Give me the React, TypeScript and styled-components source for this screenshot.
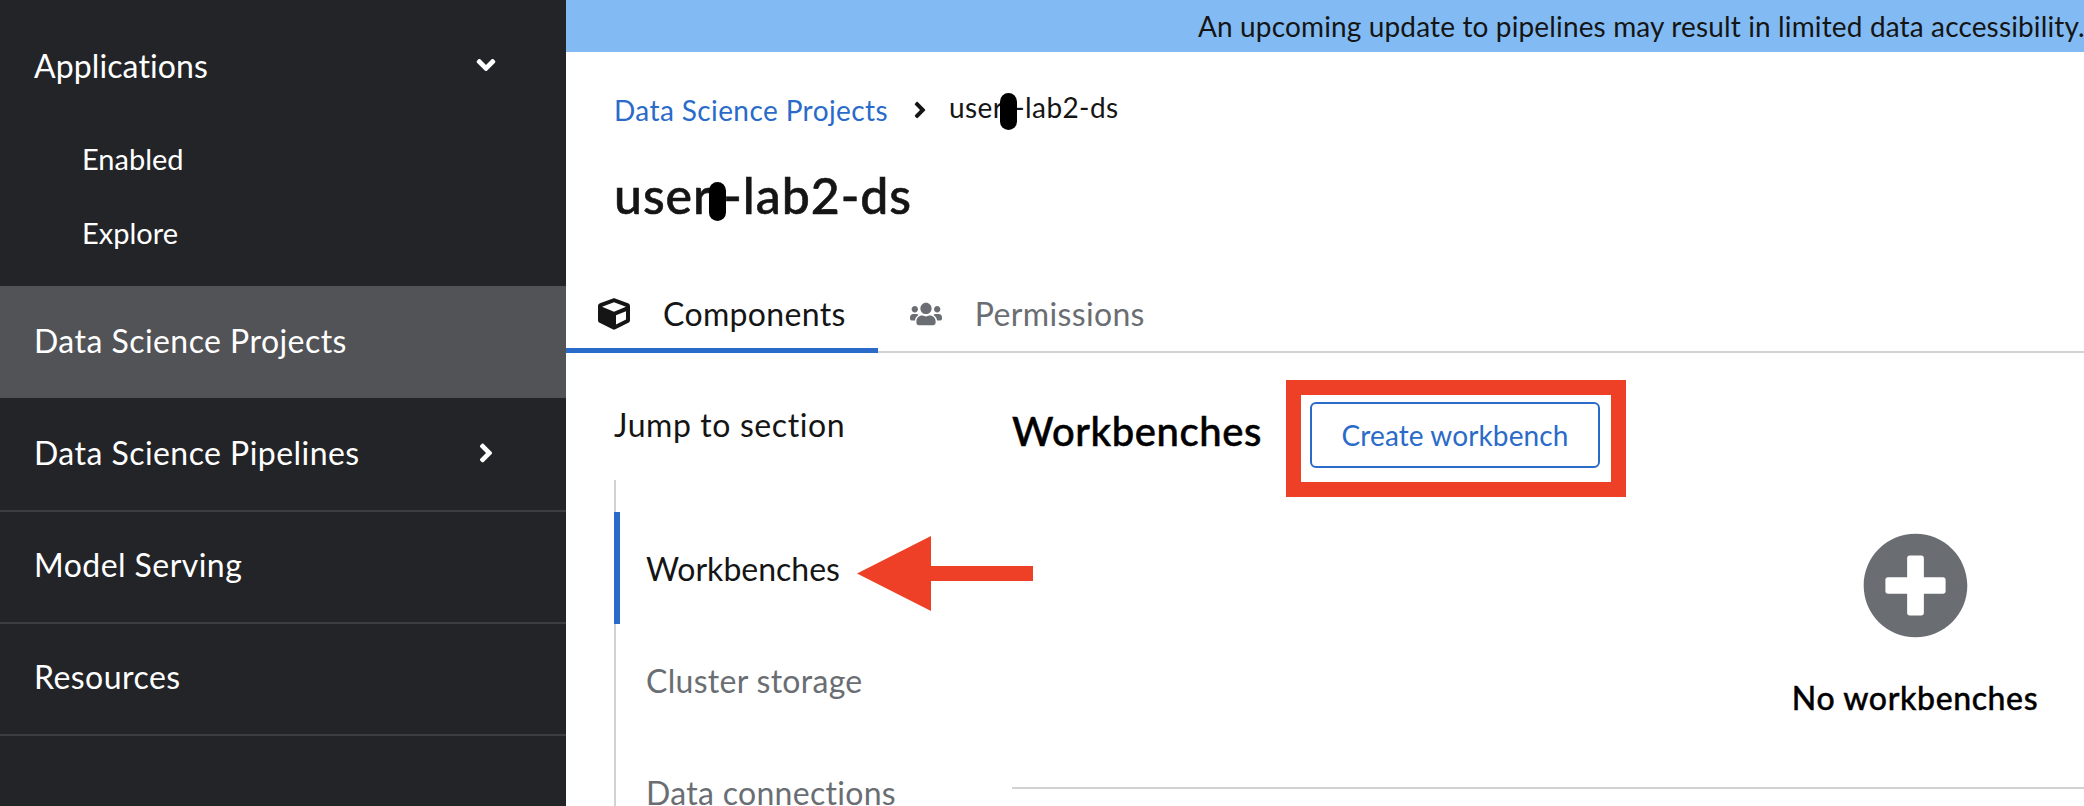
import React from "react";
import styled, { createGlobalStyle } from "styled-components";
import { FaAngleDown, FaAngleRight, FaCube, FaUsers, FaPlusCircle } from "react-icons/fa";

const colors = {
  navBg: "#232428",
  navActive: "#525357",
  navLine: "#3c3d41",
  banner: "#82bbf3",
  blue: "#2a6bca",
  text: "#151515",
  muted: "#6a6e73",
  line: "#d2d2d2",
  red: "#ee4026",
};

const GlobalStyle = createGlobalStyle`
  html, body {
    margin: 0;
    height: 100%;
    overflow: hidden;
    background: #fff;
    font-family: Lato, "Open Sans", sans-serif;
  }
`;

const Page = styled.div`
  display: flex;
  width: 2084px;
  height: 806px;
  overflow: hidden;
`;

const Sidebar = styled.nav`
  width: 566px;
  flex: none;
  background: ${colors.navBg};
  color: #fff;
`;

const AppGroup = styled.div`
  height: 286px;
  box-sizing: border-box;
  padding-top: 31px;
`;

const GroupHeader = styled.div`
  display: flex;
  align-items: center;
  justify-content: space-between;
  height: 68px;
  padding: 0 65px 0 34px;
  font-size: 32px;
  letter-spacing: 0.1px;
`;

const SubItem = styled.div`
  display: flex;
  align-items: center;
  height: 74px;
  padding-left: 82px;
  font-size: 29px;
`;

const SubList = styled.div`
  margin-top: 22px;
`;

const NavRow = styled.div<{ $active?: boolean }>`
  display: flex;
  align-items: center;
  justify-content: space-between;
  box-sizing: border-box;
  height: ${(p) => (p.$active ? "114px" : "112px")};
  padding: 0 65px ${(p) => (p.$active ? "3px" : "5px")} 34px;
  font-size: 32px;
  letter-spacing: 0.45px;
  background: ${(p) => (p.$active ? colors.navActive : "transparent")};
  background-clip: padding-box;
  border-bottom: 2px solid ${(p) => (p.$active ? colors.navBg : colors.navLine)};
`;

const Main = styled.main`
  position: relative;
  flex: 1;
  min-width: 0;
  overflow: hidden;
  background: #fff;
  color: ${colors.text};
`;

const Banner = styled.div`
  height: 52px;
  display: flex;
  align-items: center;
  padding-left: 632px;
  background: ${colors.banner};
  font-size: 28px;
  letter-spacing: 0.14px;
  white-space: nowrap;
`;

const Breadcrumb = styled.div`
  display: flex;
  align-items: center;
  height: 40px;
  margin: 38px 0 0 48px;
  font-size: 28px;
`;

const CrumbLink = styled.a`
  color: ${colors.blue};
  letter-spacing: 0.4px;
`;

const CrumbSep = styled.span`
  display: flex;
  margin: 0 16px 0 19px;
  font-size: 26px;
`;

const CrumbCurrent = styled.span`
  letter-spacing: 0.4px;
`;

const PageTitle = styled.h1`
  margin: 35px 0 0 48px;
  height: 60px;
  line-height: 60px;
  font-size: 50px;
  font-weight: 500;
  letter-spacing: 0.95px;
  -webkit-text-stroke: 0.6px ${colors.text};
`;

const Redacted = styled.span<{ $w: number; $h: number }>`
  display: inline-block;
  width: ${(p) => p.$w}px;
  height: ${(p) => p.$h}px;
  margin: 0 -3px;
  border-radius: 9px;
  background: #000;
  vertical-align: middle;
  position: relative;
`;

const Tabs = styled.div`
  display: flex;
  box-sizing: border-box;
  height: 74px;
  margin-top: 54px;
  border-bottom: 2px solid ${colors.line};
`;

const Tab = styled.div<{ $active?: boolean }>`
  display: flex;
  align-items: center;
  box-sizing: border-box;
  height: 74px;
  gap: 33px;
  padding: 0 32px;
  font-size: 32px;
  letter-spacing: 0.35px;
  color: ${(p) => (p.$active ? colors.text : colors.muted)};
  border-bottom: 5px solid ${(p) => (p.$active ? colors.blue : "transparent")};
  margin-bottom: -2px;
`;

const Body = styled.div`
  display: flex;
  padding-left: 48px;
`;

const JumpNav = styled.div`
  width: 398px;
  flex: none;
`;

const JumpTitle = styled.div`
  height: 40px;
  line-height: 40px;
  margin-top: 52px;
  font-size: 32px;
  letter-spacing: 0.6px;
`;

const JumpList = styled.div`
  margin-top: 35px;
  padding-top: 32px;
  border-left: 2px solid ${colors.line};
`;

const JumpItem = styled.div<{ $active?: boolean }>`
  display: flex;
  align-items: center;
  box-sizing: border-box;
  height: 112px;
  margin-left: -2px;
  padding-left: 26px;
  font-size: 32px;
  letter-spacing: ${(p) => (p.$active ? "0" : "0.3px")};
  color: ${(p) => (p.$active ? colors.text : colors.muted)};
  border-left: 6px solid ${(p) => (p.$active ? colors.blue : "transparent")};
`;

const Section = styled.section`
  width: 1806px;
  flex: none;
`;

const SectionHead = styled.div`
  display: flex;
  align-items: center;
  gap: 48px;
  margin-top: 49px;
`;

const SectionTitle = styled.h2`
  margin: -8px 0 0;
  font-size: 40px;
  font-weight: 500;
  letter-spacing: 0.6px;
  -webkit-text-stroke: 0.5px #000;
  color: #000;
`;

const SecondaryButton = styled.button`
  box-sizing: border-box;
  width: 290px;
  height: 66px;
  border: 2px solid ${colors.blue};
  border-radius: 6px;
  background: #fff;
  color: ${colors.blue};
  font: inherit;
  font-size: 28px;
  letter-spacing: 0.1px;
`;

const EmptyState = styled.div`
  display: flex;
  flex-direction: column;
  align-items: center;
  box-sizing: border-box;
  height: 321px;
  padding-top: 64px;
  border-bottom: 2px solid ${colors.line};
  color: ${colors.muted};
`;

const EmptyTitle = styled.div`
  margin-top: 39px;
  font-size: 32px;
  font-weight: 500;
  letter-spacing: 0.6px;
  color: #000;
  -webkit-text-stroke: 0.4px #000;
`;

const HighlightBox = styled.div`
  position: absolute;
  left: 720px;
  top: 380px;
  width: 340px;
  height: 117px;
  box-sizing: border-box;
  border: 15px solid ${colors.red};
`;

const Arrow = styled.svg`
  position: absolute;
  left: 291px;
  top: 536px;
`;

export default function App() {
  return (
    <Page>
      <GlobalStyle />
      <Sidebar>
        <AppGroup>
          <GroupHeader>
            Applications
            <FaAngleDown size={30} />
          </GroupHeader>
          <SubList>
            <SubItem>Enabled</SubItem>
            <SubItem>Explore</SubItem>
          </SubList>
        </AppGroup>
        <NavRow $active>Data Science Projects</NavRow>
        <NavRow>
          Data Science Pipelines
          <FaAngleRight size={30} />
        </NavRow>
        <NavRow>Model Serving</NavRow>
        <NavRow>Resources</NavRow>
      </Sidebar>
      <Main>
        <Banner>An upcoming update to pipelines may result in limited data accessibility.</Banner>
        <Breadcrumb>
          <CrumbLink>Data Science Projects</CrumbLink>
          <CrumbSep>
            <FaAngleRight />
          </CrumbSep>
          <CrumbCurrent>
            user
            <Redacted $w={17} $h={37} />
            -lab2-ds
          </CrumbCurrent>
        </Breadcrumb>
        <PageTitle>
          user
          <Redacted $w={17} $h={39} />
          -lab2-ds
        </PageTitle>
        <Tabs>
          <Tab $active>
            <FaCube size={32} />
            Components
          </Tab>
          <Tab>
            <FaUsers size={32} />
            Permissions
          </Tab>
        </Tabs>
        <Body>
          <JumpNav>
            <JumpTitle>Jump to section</JumpTitle>
            <JumpList>
              <JumpItem $active>Workbenches</JumpItem>
              <JumpItem>Cluster storage</JumpItem>
              <JumpItem>Data connections</JumpItem>
            </JumpList>
          </JumpNav>
          <Section>
            <SectionHead>
              <SectionTitle>Workbenches</SectionTitle>
              <SecondaryButton>Create workbench</SecondaryButton>
            </SectionHead>
            <EmptyState>
              <FaPlusCircle size={107} />
              <EmptyTitle>No workbenches</EmptyTitle>
            </EmptyState>
          </Section>
        </Body>
        <HighlightBox />
        <Arrow width="176" height="75" viewBox="0 0 176 75">
          <path d="M0 37.5 L74 0 V30 H176 V45 H74 V75 Z" fill={colors.red} />
        </Arrow>
      </Main>
    </Page>
  );
}
